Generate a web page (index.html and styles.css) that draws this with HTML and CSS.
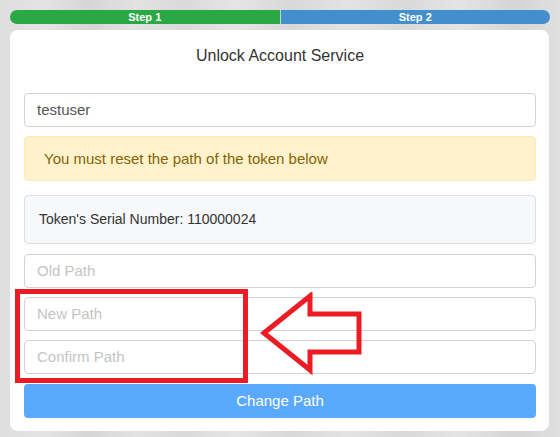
FILE: index.html
```html
<!DOCTYPE html>
<html>
<head>
<meta charset="utf-8">
<link rel="stylesheet" href="styles.css">
</head>
<body>
<div class="page">
  <div class="steps">
    <div class="step step-done">Step 1</div>
    <div class="step step-next">Step 2</div>
  </div>
  <div class="card">
    <h1 class="title">Unlock Account Service</h1>
    <div class="field field-value">testuser</div>
    <div class="alert">You must reset the path of the token below</div>
    <div class="serial">Token's Serial Number: 110000024</div>
    <div class="field field-ph">Old Path</div>
    <div class="field field-ph">New Path</div>
    <div class="field field-ph field-last">Confirm Path</div>
    <div class="btn">Change Path</div>
  </div>
  <div class="mark-box"></div>
  <svg class="mark-arrow" width="110" height="90" viewBox="0 0 110 90">
    <polygon points="6,41 52,4 52,22 101,22 101,60 52,60 52,78" fill="none" stroke="#ed1c24" stroke-width="5" stroke-linejoin="miter"/>
  </svg>
</div>
</body>
</html>
```

FILE: styles.css
```css
html, body {
  margin: 0;
  padding: 0;
}
body {
  width: 560px;
  height: 437px;
  overflow: hidden;
  font-family: "Liberation Sans", Arial, sans-serif;
  background:
    linear-gradient(90deg, #dedede 0, #e4e4e4 8%, #d6d6d6 16%, #e2e2e2 24%, #dadada 33%, #e5e5e5 42%, #d8d8d8 52%, #e3e3e3 62%, #d9d9d9 72%, #e4e4e4 82%, #d5d5d5 92%, #e0e0e0 100%);
}
.page {
  position: relative;
  padding: 10px 10px 0 10px;
}
.steps {
  display: flex;
  height: 14px;
  width: 540px;
  border-radius: 7px;
  overflow: hidden;
  margin-bottom: 6px;
}
.step {
  flex: 1;
  color: #fff;
  font-size: 11px;
  font-weight: bold;
  line-height: 14px;
  text-align: center;
}
.step-done {
  background: #2aa845;
  border-right: 1px solid #b8dcc0;
}
.step-next {
  background: #438ecd;
}
.card {
  width: 539px;
  box-sizing: border-box;
  background: #fff;
  border-radius: 8px;
  padding: 16px 13px 13px 14px;
  display: flex;
  flex-direction: column;
}
.title {
  margin: 0 0 27px 0;
  font-size: 16px;
  font-weight: normal;
  line-height: 20px;
  color: #333;
  text-align: center;
}
.field {
  height: 34px;
  box-sizing: border-box;
  border: 1px solid #cfd2d6;
  border-radius: 4px;
  padding: 0 12px;
  font-size: 15px;
  line-height: 32px;
  margin-bottom: 9px;
}
.field-value {
  color: #555;
}
.field-ph {
  color: #c4c4c4;
}
.field-last {
  margin-bottom: 10px;
}
.alert {
  height: 45px;
  box-sizing: border-box;
  background: #fff2cc;
  border: 1px solid #ffeab5;
  border-radius: 4px;
  color: #856404;
  font-size: 15px;
  line-height: 43px;
  padding: 0 19px;
  margin-bottom: 14px;
}
.serial {
  height: 49px;
  box-sizing: border-box;
  background: #f7f8fa;
  border: 1px solid #dcdfe3;
  border-radius: 4px;
  color: #333;
  font-size: 14px;
  line-height: 47px;
  padding: 0 14px;
  margin-bottom: 10px;
}
.btn {
  height: 34px;
  background: #59a9ff;
  border-radius: 4px;
  color: #fff;
  font-size: 15px;
  line-height: 34px;
  text-align: center;
}
.mark-box {
  position: absolute;
  left: 15px;
  top: 289px;
  width: 223px;
  height: 84px;
  border: 5px solid #ed1c24;
}
.mark-arrow {
  position: absolute;
  left: 258px;
  top: 292px;
}
```
